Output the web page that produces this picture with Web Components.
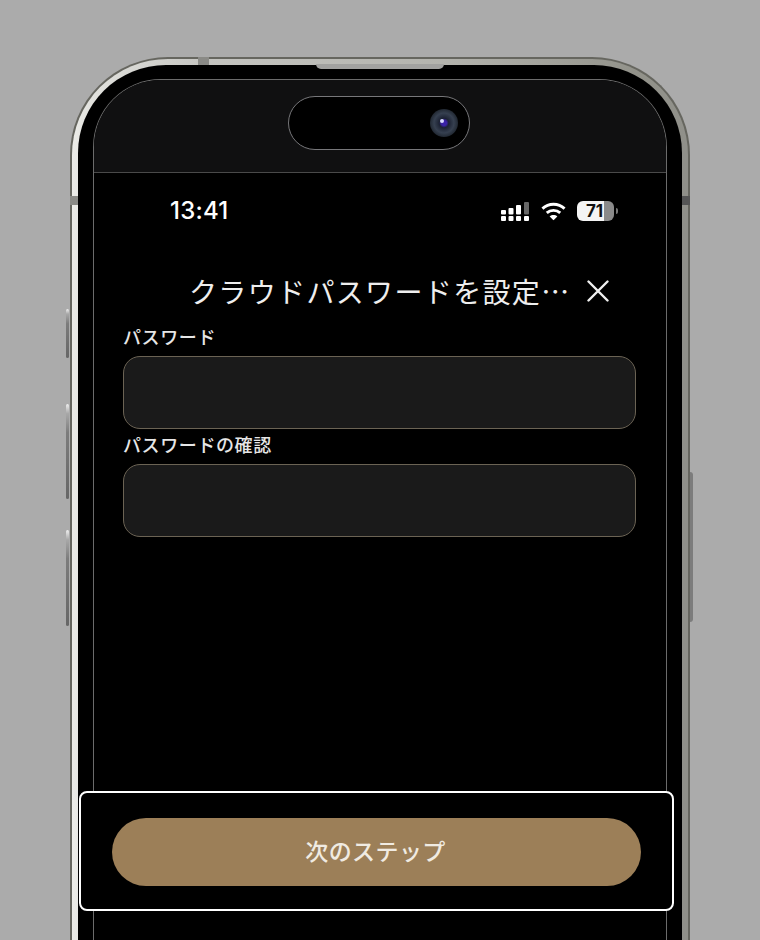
<!DOCTYPE html>
<html lang="ja">
<head>
<meta charset="utf-8">
<title>クラウドパスワード</title>
<style>
  html, body { margin: 0; height: 940px; overflow: hidden; background: #ababab; }
  body { font-family: "Noto Sans CJK JP", "Noto Sans", sans-serif; }
</style>
</head>
<body>
<phone-frame>
  <status-bar slot="status" time="13:41" battery="71"></status-bar>
  <nav-title>クラウドパスワードを設定…</nav-title>
  <form-field>パスワード</form-field>
  <form-field>パスワードの確認</form-field>
  <next-bar slot="footer">次のステップ</next-bar>
</phone-frame>

<script>
class PhoneFrame extends HTMLElement {
  constructor() {
    super();
    this.attachShadow({ mode: "open" });
  }

  static get styles() {
    return /* css */`
      :host {
        display: block;
        position: relative;
        box-sizing: border-box;
        width: 620px;
        height: 940px;
        margin: 0 0 0 70px;
        padding-top: 57px;
      }
      .rim {
        box-sizing: border-box;
        height: 883px;
        padding: 6px 6px 0;
        border: 2px solid #66665f;
        border-bottom: 0;
        border-radius: 98px 98px 0 0;
        background: linear-gradient(90deg, #ecece8 0, #e2e2de 3%, #c4c4c0 22%, #b4b4ae 60%, #92928a 92%, #90908a 100%);
      }
      .body {
        box-sizing: border-box;
        height: 100%;
        padding: 14px 15px 0;
        border-radius: 88px 88px 0 0;
        background: #000;
      }
      .screen {
        box-sizing: border-box;
        height: 861px;
        border: 1px solid #6b6b6b;
        border-bottom: 0;
        border-radius: 68px 68px 0 0;
        background: #000;
        display: flex;
        flex-direction: column;
      }
      .head {
        box-sizing: border-box;
        flex: none;
        height: 93px;
        padding: 16px 3px 0 0;
        border-bottom: 1px solid #4a4a4a;
        border-radius: 67px 67px 0 0;
        background: #101011;
        display: flex;
        justify-content: center;
      }
      .island {
        box-sizing: border-box;
        width: 182px;
        height: 54px;
        padding-right: 11px;
        border: 1px solid #77777a;
        border-radius: 27px;
        background: #000;
        display: flex;
        align-items: center;
        justify-content: flex-end;
      }
      .lens {
        width: 28px;
        height: 28px;
        border-radius: 50%;
        background: radial-gradient(circle at 50% 50%, #3a22a8 0 13%, #1c2233 24%, #364050 50%, #1a2028 78%, #0a0c10 100%);
        position: relative;
      }
      .lens::after {
        content: "";
        position: absolute;
        left: 10px;
        top: 10px;
        width: 4px;
        height: 4px;
        border-radius: 50%;
        background: #d8dcff;
      }
      .content {
        flex: 1;
        display: flex;
        flex-direction: column;
      }
      .foot { flex: none; margin: 0 -8px 0 -15px; padding-bottom: 29px; }
      /* side buttons and antenna bands lie over the rim */
      .key {
        position: absolute;
        left: -4px;
        width: 3px;
        box-sizing: border-box;
        border-radius: 3px;
        background: linear-gradient(180deg, #f0f0f0 0, #a8a8a8 10%, #7c7c7c 30%, #666 100%);
      }
      .key.right {
        left: auto;
        right: -3px;
        top: 472px;
        width: 3px;
        height: 150px;
        border-radius: 0 3px 3px 0;
        background: #7c7c7c;
      }
      .band { position: absolute; background: #8a8a86; }
      .speaker {
        position: absolute;
        left: 246px;
        top: 64px;
        width: 128px;
        height: 5px;
        border-radius: 0 0 5px 5px;
        background: #a2a2a0;
      }
    `;
  }

  connectedCallback() {
    this.render();
  }

  render() {
    this.shadowRoot.innerHTML = /* html */`
      <style>${PhoneFrame.styles}</style>
      <div class="rim">
        <div class="body">
          <div class="screen">
            <div class="head">
              <div class="island"><div class="lens"></div></div>
            </div>
            <slot name="status"></slot>
            <div class="content"><slot></slot></div>
            <div class="foot"><slot name="footer"></slot></div>
          </div>
        </div>
      </div>
      <div class="speaker"></div>
      <div class="band" style="left:128px;top:57px;width:11px;height:8px"></div>
      <div class="band" style="left:0;top:196px;width:8px;height:9px"></div>
      <div class="band" style="left:612px;top:196px;width:8px;height:9px;background:#555"></div>
      <div class="key" style="top:309px;height:49px"></div>
      <div class="key" style="top:404px;height:95px"></div>
      <div class="key" style="top:530px;height:96px"></div>
      <div class="key right"></div>
    `;
  }
}

class StatusBar extends HTMLElement {
  constructor() {
    super();
    this.attachShadow({ mode: "open" });
  }

  static get styles() {
    return /* css */`
      :host {
        display: flex;
        align-items: center;
        justify-content: space-between;
        height: 76px;
        padding: 0 52px 0 76px;
        color: #fff;
      }
      .time {
        font: 500 24px/1 Inter, "Liberation Sans", sans-serif;
        letter-spacing: 0.2px;
      }
      .icons { display: flex; align-items: center; gap: 11px; }
      .cell, .wifi { display: block; }
      .batt {
        box-sizing: border-box;
        width: 37px;
        height: 20px;
        border-radius: 6px;
        background: linear-gradient(90deg, #f4f4f4 0 73%, #8a8a8a 73%);
        color: #111;
        font: 700 17px/20px Inter, "Liberation Sans", sans-serif;
        text-align: center;
        padding-right: 2px;
        position: relative;
      }
      .batt::after {
        content: "";
        position: absolute;
        right: -4px;
        top: 7px;
        width: 2px;
        height: 6px;
        border-radius: 0 2px 2px 0;
        background: #777;
      }
    `;
  }

  connectedCallback() {
    const time = this.getAttribute("time");
    const battery = this.getAttribute("battery");
    this.shadowRoot.innerHTML = /* html */`
      <style>${StatusBar.styles}</style>
      <span class="time">${time}</span>
      <div class="icons">
        <svg class="cell" width="30" height="20" viewBox="0 0 30 20" fill="#fff">
          <rect x="1" y="9" width="5" height="4.5" rx="1"/><rect x="1" y="15" width="5" height="5" rx="1"/>
          <rect x="8.5" y="7" width="5" height="6.5" rx="1"/><rect x="8.5" y="15" width="5" height="5" rx="1"/>
          <rect x="16" y="4" width="5" height="9.5" rx="1"/><rect x="16" y="15" width="5" height="5" rx="1"/>
          <rect x="24" y="1" width="5" height="12.5" rx="1" fill="#666"/><rect x="24" y="15" width="5" height="5" rx="1"/>
        </svg>
        <svg class="wifi" width="25" height="20" viewBox="0 0 26 20" fill="none" stroke="#fff" stroke-width="3">
          <path d="M1.5 7.5C8 1.5 18 1.5 24.5 7.5"/>
          <path d="M6 12C10 8.4 16 8.4 20 12"/>
          <path d="M13 19.5L9 15.6C11.3 13.6 14.7 13.6 17 15.6Z" fill="#fff" stroke="none"/>
        </svg>
        <div class="batt">${battery}</div>
      </div>
    `;
  }
}

class NavTitle extends HTMLElement {
  constructor() {
    super();
    this.attachShadow({ mode: "open" });
  }

  connectedCallback() {
    this.shadowRoot.innerHTML = /* html */`
      <style>
        :host {
          display: flex;
          align-items: center;
          height: 60px;
          margin-top: 12px;
          padding-left: 95px;
          color: #eee;
        }
        .text {
          font-size: 28px;
          line-height: 60px;
          letter-spacing: 1.35px;
          white-space: nowrap;
        }
        svg { display: block; margin-left: 16px; flex: none; }
      </style>
      <span class="text"><slot></slot></span>
      <svg width="22" height="22" viewBox="0 0 22 22" fill="none" stroke="#f0f0f0" stroke-width="2.4" stroke-linecap="round">
        <path d="M1.5 1.5L20.5 20.5M20.5 1.5L1.5 20.5"/>
      </svg>
    `;
  }
}

class FormField extends HTMLElement {
  constructor() {
    super();
    this.attachShadow({ mode: "open" });
  }

  connectedCallback() {
    this.shadowRoot.innerHTML = /* html */`
      <style>
        :host {
          display: block;
          margin: 0 30px 0 29px;
          color: #e6e6e6;
        }
        label {
          display: block;
          height: 35px;
          font-size: 18px;
          font-weight: 500;
          line-height: 30px;
          letter-spacing: 0.6px;
          white-space: nowrap;
        }
        input {
          display: block;
          box-sizing: border-box;
          width: 100%;
          height: 73px;
          border: 1.5px solid #6b6354;
          border-radius: 17px;
          background: #1a1a1a;
          outline: none;
        }
      </style>
      <label><slot></slot></label>
      <input type="password">
    `;
  }
}

class NextBar extends HTMLElement {
  constructor() {
    super();
    this.attachShadow({ mode: "open" });
  }

  connectedCallback() {
    this.shadowRoot.innerHTML = /* html */`
      <style>
        :host {
          display: block;
          box-sizing: border-box;
          height: 120px;
          padding: 25px 0 0 31px;
          border: 2px solid #fff;
          border-radius: 8px;
          background: #000;
        }
        button {
          display: block;
          width: 529px;
          height: 68px;
          padding: 0 2px 4px 0;
          border: 0;
          border-radius: 34px;
          background: #9c7f58;
          color: #f0ebe2;
          font: 500 23px/1 "Noto Sans CJK JP", sans-serif;
          letter-spacing: 0.4px;
        }
      </style>
      <button type="button"><slot></slot></button>
    `;
  }
}

customElements.define("phone-frame", PhoneFrame);
customElements.define("status-bar", StatusBar);
customElements.define("nav-title", NavTitle);
customElements.define("form-field", FormField);
customElements.define("next-bar", NextBar);
</script>
</body>
</html>
